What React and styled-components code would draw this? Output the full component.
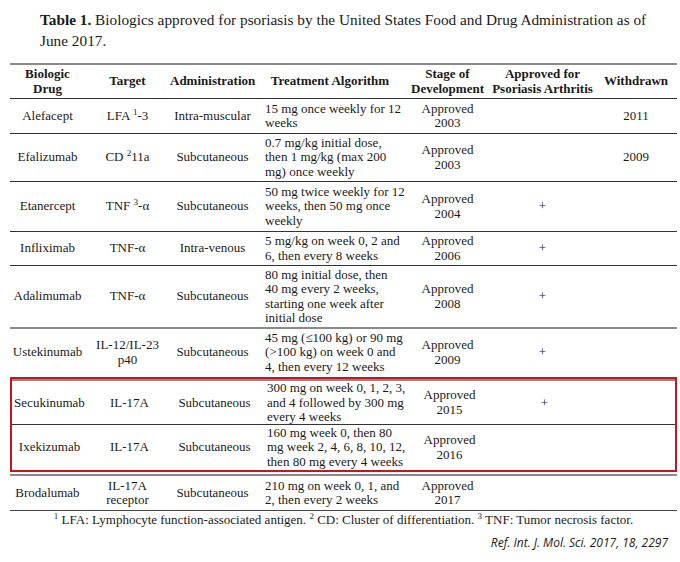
import React from "react";
import styled, { createGlobalStyle } from "styled-components";

const GlobalStyle = createGlobalStyle`
  body {
    margin: 0;
    background: #ffffff;
    font-family: "Liberation Serif", "Times New Roman", serif;
    color: #1a1a1a;
  }
`;

const Page = styled.div`
  width: 680px;
  height: 562px;
  padding: 9px 3px 0 10px;
  box-sizing: border-box;
`;

const Caption = styled.p`
  margin: 0 0 0 30px;
  font-size: 15.3px;
  line-height: 21px;
`;

const Table = styled.div`
  margin-top: 12px;
  width: 667px;
  border-top: 2px solid #8a8a8a;
  border-bottom: 1px solid #444;
`;

const COLS = "75px 85px 85px 150px 85px 105px 82px";

const Row = styled.div`
  display: grid;
  grid-template-columns: ${COLS};
  height: ${(p) => p.$h}px;
  align-items: center;
  font-size: 13px;
  line-height: 14.5px;
  border-top: ${(p) => p.$line || "none"};
  box-sizing: border-box;
`;

const HeadRow = styled(Row)`
  font-weight: bold;
  border-bottom: 1px solid #333;
`;

const Cell = styled.div`
  text-align: ${(p) => (p.$left ? "left" : "center")};
  padding-left: ${(p) => (p.$left ? "10px" : "0")};
`;

const Sup = styled.sup`
  font-size: 9px;
  line-height: 0;
`;

const Highlight = styled.div`
  border: 2px solid #c8141e;
  margin: 1px 0 2px;
`;

const Footnote = styled.div`
  text-align: center;
  font-size: 13px;
  margin-top: 1px;
`;

const RefLine = styled.div`
  text-align: right;
  font-family: "Open Sans", "Liberation Sans", sans-serif;
  font-style: italic;
  font-size: 12px;
  margin-top: 6px;
  padding-right: 9px;
`;

const thin = "1px solid #333";
const thick = "2px solid #8a8a8a";

const TableRow = ({ h, line, cells }) => (
  <Row $h={h} $line={line}>
    {cells.map((c, i) => (
      <Cell key={i} $left={i === 3}>
        {c}
      </Cell>
    ))}
  </Row>
);

const br = (a, b) => (
  <>
    {a}
    <br />
    {b}
  </>
);

export default function App() {
  return (
    <Page>
      <GlobalStyle />
      <Caption>
        <b>Table 1.</b> Biologics approved for psoriasis by the United States Food and Drug Administration as of
        <br />
        June 2017.
      </Caption>
      <Table>
        <HeadRow $h={34}>
          <Cell>{br("Biologic", "Drug")}</Cell>
          <Cell>Target</Cell>
          <Cell>Administration</Cell>
          <Cell>Treatment Algorithm</Cell>
          <Cell>{br("Stage of", "Development")}</Cell>
          <Cell>{br("Approved for", "Psoriasis Arthritis")}</Cell>
          <Cell>Withdrawn</Cell>
        </HeadRow>
        <TableRow
          h={34}
          cells={[
            "Alefacept",
            <>LFA <Sup>1</Sup>-3</>,
            "Intra-muscular",
            br("15 mg once weekly for 12", "weeks"),
            br("Approved", "2003"),
            "",
            "2011",
          ]}
        />
        <TableRow
          h={48}
          line={thin}
          cells={[
            "Efalizumab",
            <>CD <Sup>2</Sup>11a</>,
            "Subcutaneous",
            <>0.7 mg/kg initial dose,<br />then 1 mg/kg (max 200<br />mg) once weekly</>,
            br("Approved", "2003"),
            "",
            "2009",
          ]}
        />
        <TableRow
          h={50}
          line={thin}
          cells={[
            "Etanercept",
            <>TNF <Sup>3</Sup>-α</>,
            "Subcutaneous",
            <>50 mg twice weekly for 12<br />weeks, then 50 mg once<br />weekly</>,
            br("Approved", "2004"),
            "+",
            "",
          ]}
        />
        <TableRow
          h={34}
          line={thin}
          cells={[
            "Infliximab",
            "TNF-α",
            "Intra-venous",
            br("5 mg/kg on week 0, 2 and", "6, then every 8 weeks"),
            br("Approved", "2006"),
            "+",
            "",
          ]}
        />
        <TableRow
          h={62}
          line={thin}
          cells={[
            "Adalimumab",
            "TNF-α",
            "Subcutaneous",
            <>80 mg initial dose, then<br />40 mg every 2 weeks,<br />starting one week after<br />initial dose</>,
            br("Approved", "2008"),
            "+",
            "",
          ]}
        />
        <TableRow
          h={49}
          line={thick}
          cells={[
            "Ustekinumab",
            br("IL-12/IL-23", "p40"),
            "Subcutaneous",
            <>45 mg (≤100 kg) or 90 mg<br />(&gt;100 kg) on week 0 and<br />4, then every 12 weeks</>,
            br("Approved", "2009"),
            "+",
            "",
          ]}
        />
        <Highlight>
          <TableRow
            h={45}
            line={thick}
            cells={[
              "Secukinumab",
              "IL-17A",
              "Subcutaneous",
              <>300 mg on week 0, 1, 2, 3,<br />and 4 followed by 300 mg<br />every 4 weeks</>,
              br("Approved", "2015"),
              "+",
              "",
            ]}
          />
          <TableRow
            h={46}
            line={thin}
            cells={[
              "Ixekizumab",
              "IL-17A",
              "Subcutaneous",
              <>160 mg week 0, then 80<br />mg week 2, 4, 6, 8, 10, 12,<br />then 80 mg every 4 weeks</>,
              br("Approved", "2016"),
              "",
              "",
            ]}
          />
        </Highlight>
        <TableRow
          h={36}
          line={thick}
          cells={[
            "Brodalumab",
            br("IL-17A", "receptor"),
            "Subcutaneous",
            br("210 mg on week 0, 1, and", "2, then every 2 weeks"),
            br("Approved", "2017"),
            "",
            "",
          ]}
        />
      </Table>
      <Footnote>
        <Sup>1</Sup> LFA: Lymphocyte function-associated antigen. <Sup>2</Sup> CD: Cluster of differentiation.{" "}
        <Sup>3</Sup> TNF: Tumor necrosis factor.
      </Footnote>
      <RefLine>Ref. Int. J. Mol. Sci. 2017, 18, 2297</RefLine>
    </Page>
  );
}
